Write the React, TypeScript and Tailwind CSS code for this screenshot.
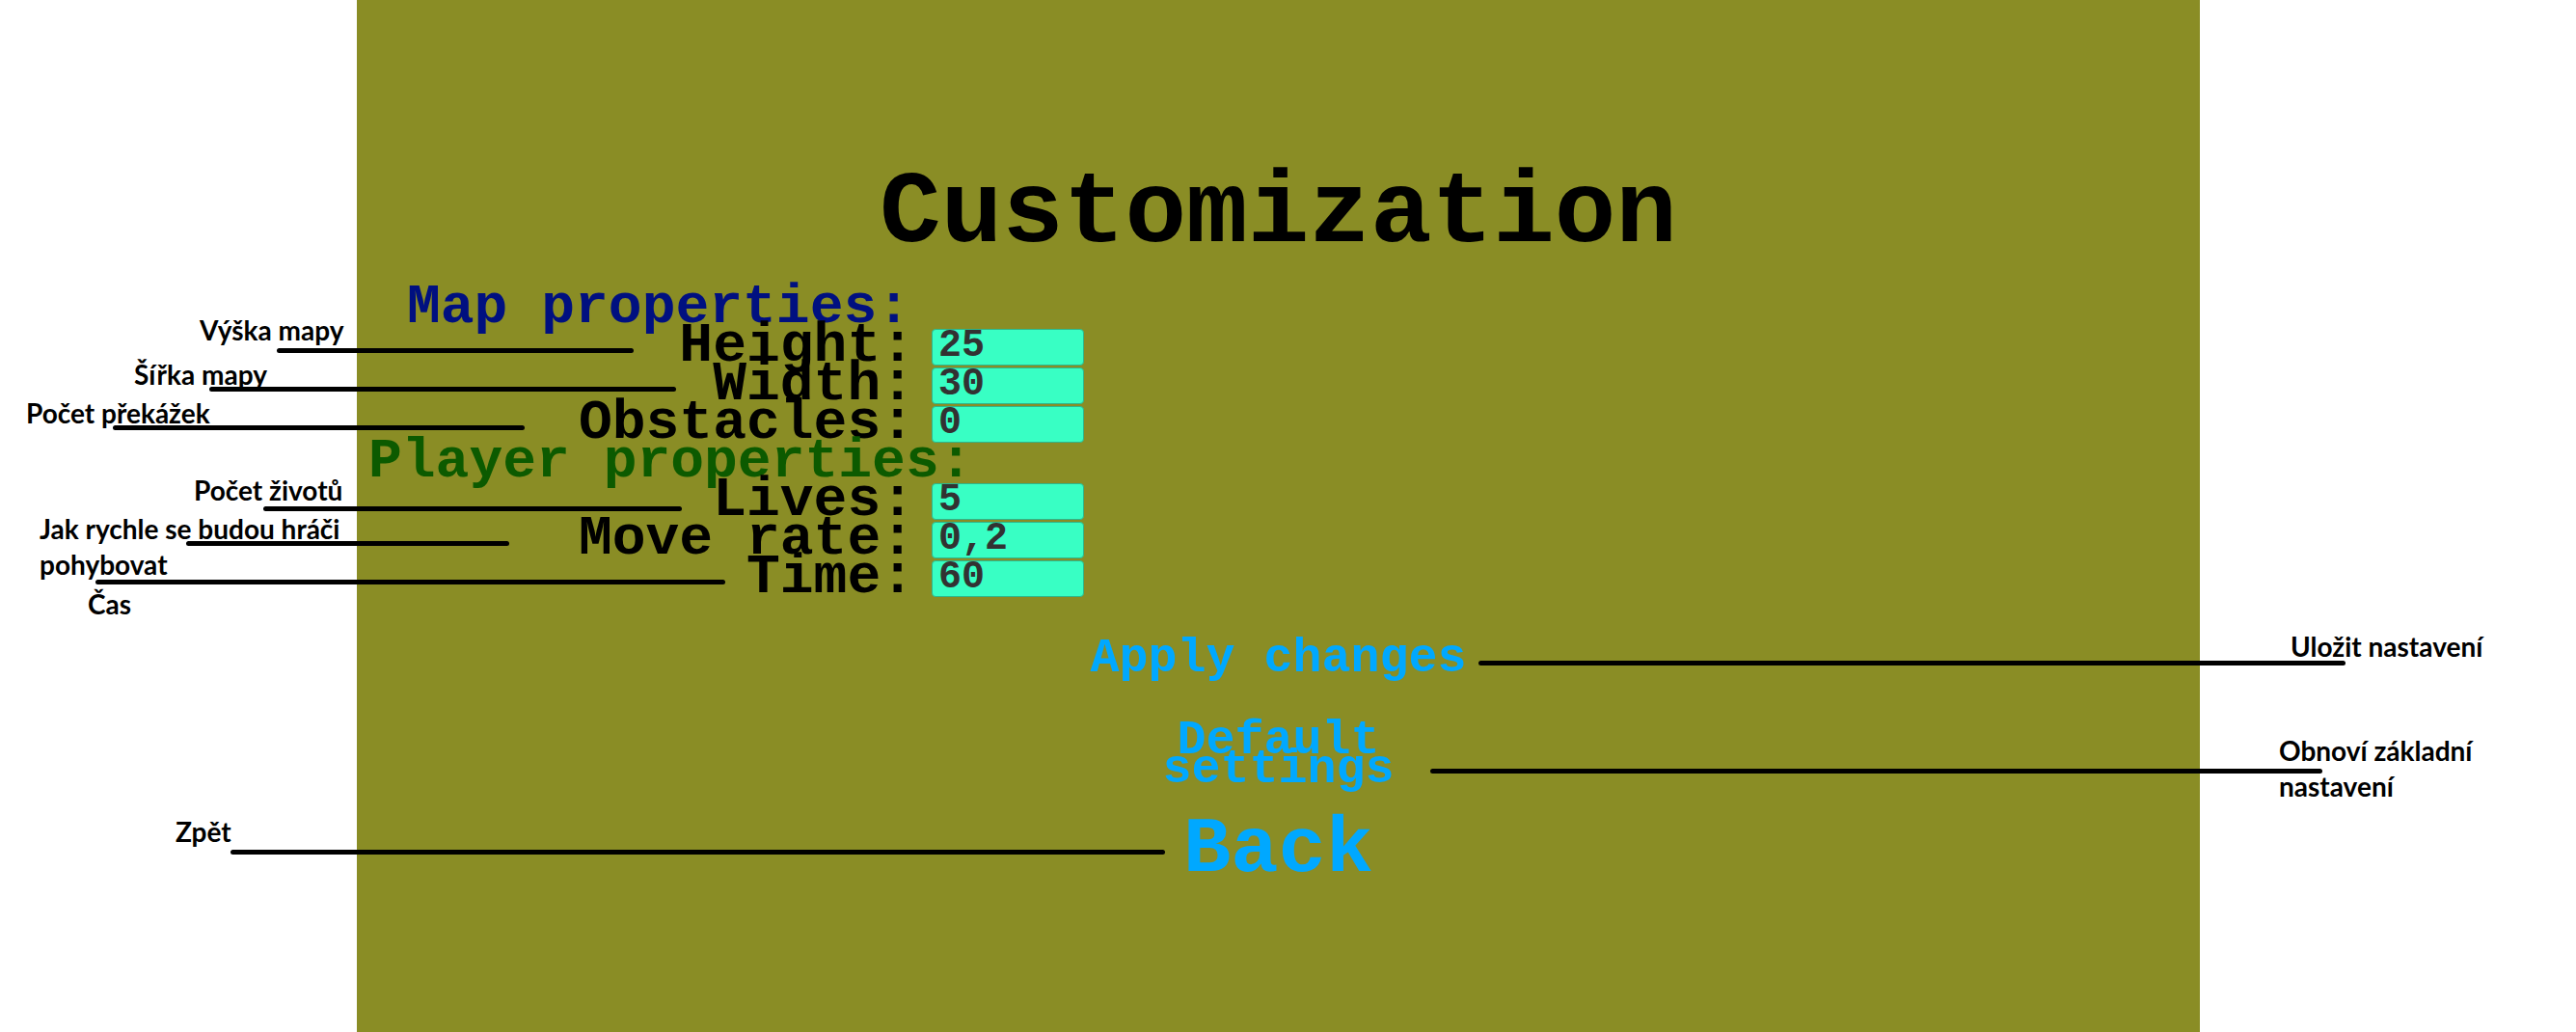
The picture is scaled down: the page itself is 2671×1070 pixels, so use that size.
import { useState } from "react";

type FieldProps = { id: string; label: string; initial: string };

function Field({ id, label, initial }: FieldProps) {
  const [value, setValue] = useState(initial);
  return (
    <div className="flex h-10 items-start gap-[18px]">
      <label htmlFor={id} className="w-[578px] text-right text-[58px] leading-[38px] text-black">
        {label}
      </label>
      <input
        id={id}
        type="text"
        value={value}
        onChange={(e) => setValue(e.target.value)}
        className="mt-px h-[38px] w-[158px] rounded border border-[#2fb58a] bg-[#38ffc4] px-1.5 pb-1 text-[40px] font-bold leading-8 text-[#323232] outline-none"
      />
    </div>
  );
}

const lines = [
  "left-[287px] top-[361px] w-[370px]",
  "left-[217px] top-[401px] w-[484px]",
  "left-[117px] top-[441px] w-[427px]",
  "left-[273px] top-[525px] w-[434px]",
  "left-[193px] top-[561px] w-[335px]",
  "left-[99px] top-[601px] w-[653px]",
  "left-[239px] top-[881px] w-[969px]",
  "right-[239px] top-[685px] w-[899px]",
  "right-[263px] top-[797px] w-[925px]",
];

export default function App() {
  return (
    <div className="relative flex min-h-screen bg-white font-['Lato',sans-serif] text-[28px] font-bold leading-[37px] text-black">
      <aside className="flex w-[370px] shrink-0 flex-col items-start whitespace-nowrap pt-[324px]">
        <p className="ml-[207px]">Výška mapy</p>
        <p className="ml-[139px] mt-[9px]">Šířka mapy</p>
        <p className="ml-[27px] mt-[3px]">Počet překážek</p>
        <p className="ml-[201px] mt-[43px]">Počet životů</p>
        <p className="ml-[41px] mt-[3px]">
          Jak rychle se budou hráči
          <br />
          pohybovat
        </p>
        <p className="ml-[91px] mt-[4px]">Čas</p>
        <p className="ml-[182px] mt-[199px]">Zpět</p>
      </aside>

      <main className="flex min-w-0 flex-1 flex-col bg-[#8a8d25] pt-[174px] font-['Liberation_Mono',monospace]">
        <h1 className="text-center text-[106px] leading-[96px]">Customization</h1>

        <form className="mt-[30px] flex flex-col" onSubmit={(e) => e.preventDefault()}>
          <h2 className="h-10 pl-[52px] text-[58px] leading-[38px] text-[#001080]">Map properties:</h2>
          <Field id="height" label="Height:" initial="25" />
          <Field id="width" label="Width:" initial="30" />
          <Field id="obstacles" label="Obstacles:" initial="0" />
          <h2 className="h-10 pl-3 text-[58px] leading-[38px] text-[#0c5a00]">Player properties:</h2>
          <Field id="lives" label="Lives:" initial="5" />
          <Field id="move-rate" label="Move rate:" initial="0,2" />
          <Field id="time" label="Time:" initial="60" />

          <div className="mt-[48px] flex flex-col items-center text-[#00a8ff]">
            <button type="submit" className="text-[50px] leading-[30px]">
              Apply changes
            </button>
            <button type="button" className="mt-[55px] w-[260px] text-[50px] leading-[30px]">
              Default settings
            </button>
            <button type="button" className="mt-[45px] text-[82px] leading-[48px]">
              Back
            </button>
          </div>
        </form>
      </main>

      <aside className="flex w-[390px] shrink-0 flex-col items-start whitespace-nowrap pt-[652px]">
        <p className="ml-[94px]">Uložit nastavení</p>
        <p className="ml-[82px] mt-[71px]">
          Obnoví základní
          <br />
          nastavení
        </p>
      </aside>

      {lines.map((position) => (
        <span key={position} aria-hidden="true" className={`pointer-events-none absolute h-[5px] rounded-sm bg-black ${position}`} />
      ))}
    </div>
  );
}
